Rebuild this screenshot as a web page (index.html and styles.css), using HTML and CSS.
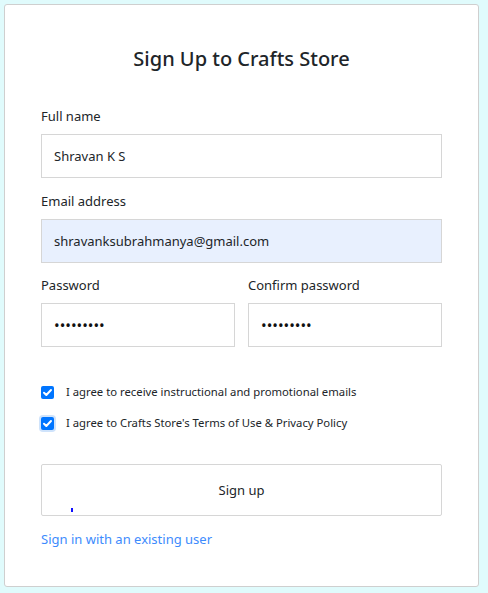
FILE: index.html
```html
<!DOCTYPE html>
<html lang="en">
<head>
<meta charset="utf-8">
<title>Sign Up</title>
<link rel="stylesheet" href="styles.css">
</head>
<body>
<div class="card">
  <h1 class="title">Sign Up to Crafts Store</h1>
  <form class="form">
    <div class="field">
      <label class="label">Full name</label>
      <div class="input">Shravan K S</div>
    </div>
    <div class="field">
      <label class="label">Email address</label>
      <div class="input autofill">shravanksubrahmanya@gmail.com</div>
    </div>
    <div class="row">
      <div class="field">
        <label class="label">Password</label>
        <div class="input dots">•••••••••</div>
      </div>
      <div class="field">
        <label class="label">Confirm password</label>
        <div class="input dots">•••••••••</div>
      </div>
    </div>
    <div class="checks">
      <label class="check"><span class="box"><svg viewBox="0 0 13 13" width="13" height="13"><path d="M3 6.8 L5.3 9 L10 4" fill="none" stroke="#fff" stroke-width="2" stroke-linecap="round" stroke-linejoin="round"/></svg></span>I agree to receive instructional and promotional emails</label>
      <label class="check"><span class="box focus"><svg viewBox="0 0 13 13" width="13" height="13"><path d="M3 6.8 L5.3 9 L10 4" fill="none" stroke="#fff" stroke-width="2" stroke-linecap="round" stroke-linejoin="round"/></svg></span>I agree to Crafts Store's Terms of Use &amp; Privacy Policy</label>
    </div>
    <div class="button">Sign up<span class="mark"></span></div>
    <a class="link" href="#">Sign in with an existing user</a>
  </form>
</div>
</body>
</html>
```
FILE: styles.css
```css
html, body {
  margin: 0;
  padding: 0;
  background: #e0fbfc;
}
body {
  padding: 4px 9px 6px 4px;
  font-family: "Segoe UI", "Noto Sans", sans-serif;
  color: #212529;
}
.card {
  background: #fff;
  border: 1px solid #cfcfcf;
  border-radius: 3px;
  height: 583px;
  box-sizing: border-box;
  padding: 0 36px;
}
.title {
  margin: 40px 0 0;
  text-align: center;
  font-size: 20px;
  font-weight: 500;
  line-height: 28px;
  color: #212529;
}
.form {
  margin-top: 34px;
  display: flex;
  flex-direction: column;
}
.field {
  display: flex;
  flex-direction: column;
  min-width: 0;
}
.field + .field { margin-top: 14px; }
.label {
  font-size: 13px;
  line-height: 18px;
  margin-bottom: 9px;
}
.input {
  height: 44px;
  box-sizing: border-box;
  border: 1px solid #d6d6d6;
  padding: 0 12px;
  display: flex;
  align-items: center;
  font-size: 13px;
  background: #fff;
}
.autofill { background: #e8f0fe; }
.dots { font-size: 15px; letter-spacing: 0; color: #111; }
.row {
  display: grid;
  grid-template-columns: 1fr 1fr;
  gap: 13px;
  margin-top: 13px;
}
.row .field + .field { margin-top: 0; }
.checks {
  margin-top: 38px;
  display: flex;
  flex-direction: column;
  gap: 17px;
}
.check {
  display: flex;
  align-items: center;
  font-size: 11.3px;
  line-height: 14px;
}
.box {
  width: 13px;
  height: 13px;
  border-radius: 2px;
  background: #0075ff;
  margin-right: 12px;
  display: flex;
}
.box.focus { box-shadow: 0 0 0 2px #cfe3fb; }
.button {
  position: relative;
  margin-top: 34px;
  height: 52px;
  box-sizing: border-box;
  border: 1px solid #d6d6d6;
  border-radius: 2px;
  display: flex;
  align-items: center;
  justify-content: center;
  font-size: 13px;
}
.mark {
  position: absolute;
  left: 29px;
  top: 43px;
  width: 2px;
  height: 4px;
  background: #1010ff;
}
.link {
  margin-top: 14px;
  font-size: 13px;
  color: #3d8bfd;
  text-decoration: none;
  line-height: 18px;
}
```
